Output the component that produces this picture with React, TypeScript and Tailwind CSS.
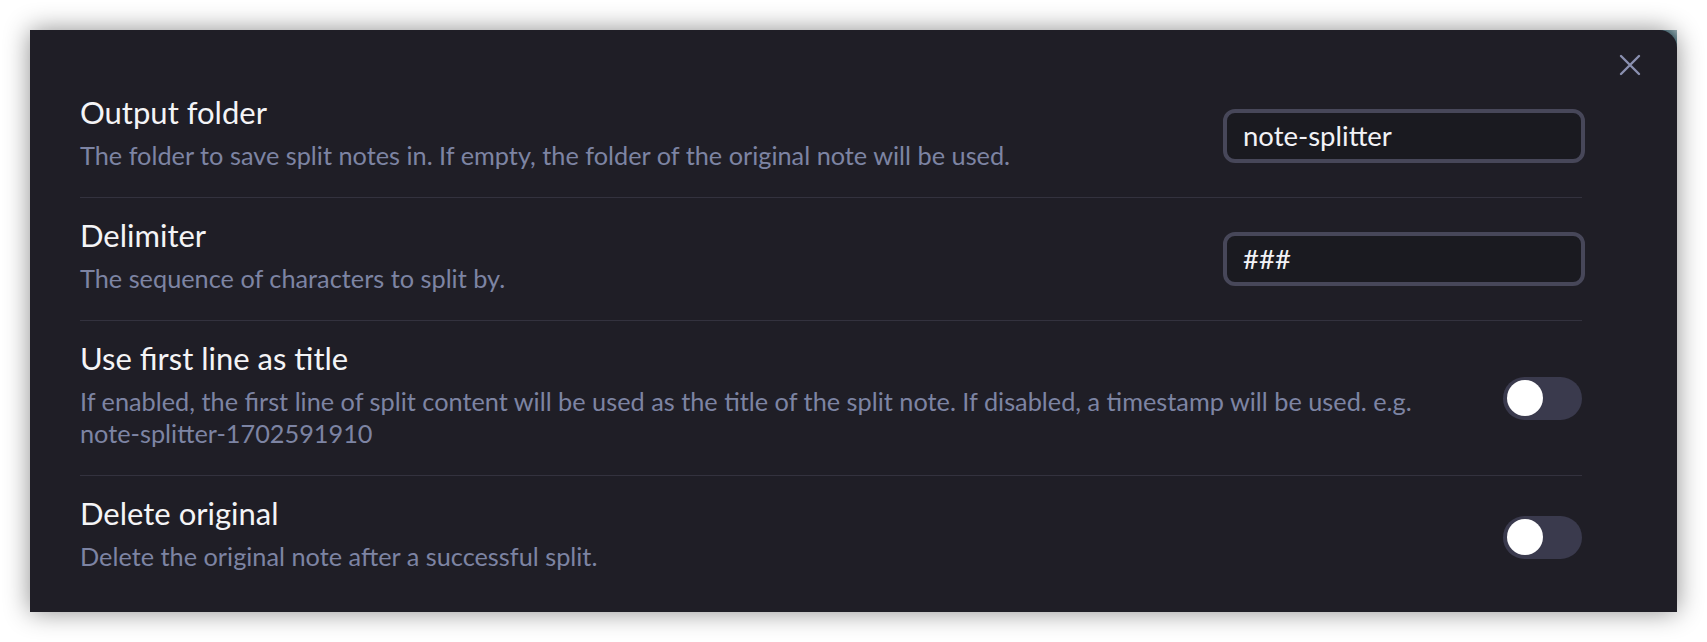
import React from "react";

const font = { fontFamily: '"Lato", "Noto Sans", sans-serif' };

function Toggle() {
  return (
    <div className="w-[79px] h-[43px] rounded-full bg-[#3a3a4d] flex items-center px-[4px] shrink-0">
      <div className="w-[36px] h-[36px] rounded-full bg-white" />
    </div>
  );
}

function TextInput({ value }: { value: string }) {
  return (
    <div className="w-[362px] h-[54px] mr-[-3px] shrink-0 rounded-[12px] border-[4px] border-[#474759] bg-[#1a1a20] flex items-center pl-[16px] text-[27.5px] text-[#f2f2f6]">
      {value}
    </div>
  );
}

function Row({
  title,
  desc,
  control,
  first,
}: {
  title: string;
  desc: React.ReactNode;
  control: React.ReactNode;
  first?: boolean;
}) {
  return (
    <div className={`flex items-center ${first ? "" : "border-t border-[#33323e]"}`}>
      <div className="flex-1 min-w-0 mr-[40px] pt-[17px] pb-[26px]">
        <div className="text-[31px] leading-[40px] text-[#f4f4f6]">{title}</div>
        <div className="mt-[7px] text-[25.3px] leading-[32px] text-[#7d84a3]">{desc}</div>
      </div>
      {control}
    </div>
  );
}

export default function App() {
  return (
    <div className="w-[1707px] h-[642px] bg-white p-[30px]" style={font}>
      <div className="relative w-[1647px] h-[582px]">
        <div className="absolute right-0 top-0 w-[24px] h-[24px] bg-[radial-gradient(circle_at_0%_100%,#2c5866_60%,#9fb4ba_100%)]" />
        <div className="relative w-full h-full bg-[#1f1e26] rounded-tr-[18px] shadow-[0_0_26px_rgba(0,0,0,0.45)] pt-[45px] pb-[14px] pl-[50px] pr-[95px]">
          <button className="absolute right-[36px] top-[24px] w-[22px] h-[22px] text-[#8a90b0]">
            <svg viewBox="0 0 22 22" width="22" height="22" fill="none" stroke="currentColor" strokeWidth="2.4" strokeLinecap="round">
              <path d="M2 2 L20 20 M20 2 L2 20" />
            </svg>
          </button>
          <Row
            first
            title="Output folder"
            desc="The folder to save split notes in. If empty, the folder of the original note will be used."
            control={<TextInput value="note-splitter" />}
          />
          <Row
            title="Delimiter"
            desc="The sequence of characters to split by."
            control={<TextInput value="###" />}
          />
          <Row
            title="Use first line as title"
            desc={
              <>
                If enabled, the first line of split content will be used as the title of the split note. If disabled, a timestamp will be used. e.g.{" "}
                <span className="whitespace-nowrap">note-splitter-1702591910</span>
              </>
            }
            control={<Toggle />}
          />
          <Row
            title="Delete original"
            desc="Delete the original note after a successful split."
            control={<Toggle />}
          />
        </div>
      </div>
    </div>
  );
}
